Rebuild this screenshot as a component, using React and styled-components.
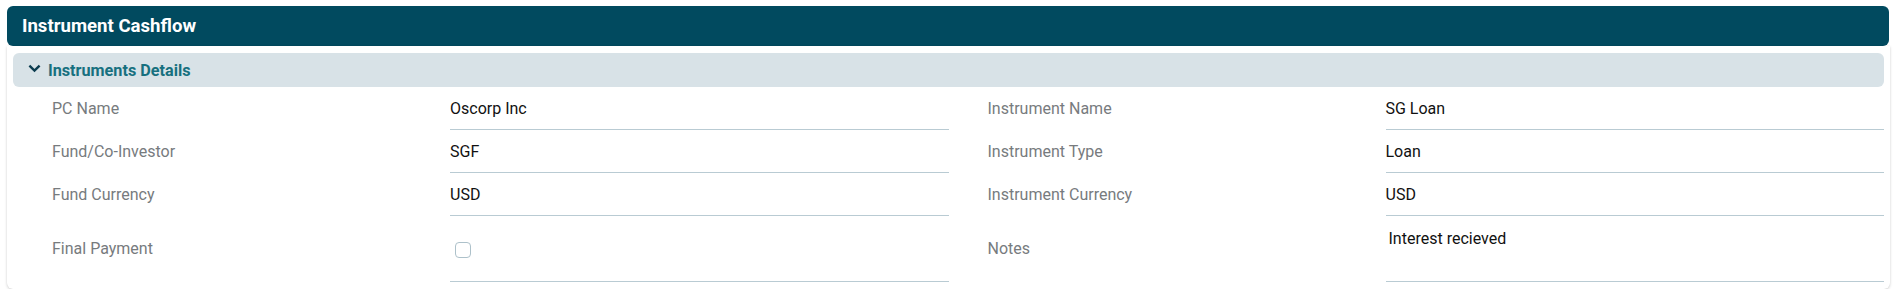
import React from "react";
import styled, { createGlobalStyle } from "styled-components";

const GlobalStyle = createGlobalStyle`
  html, body { margin: 0; padding: 0; background: #ffffff; }
  body { font-family: Roboto, "Noto Sans", Arial, sans-serif; }
  * { box-sizing: border-box; }
`;

const Page = styled.div`
  padding: 6px 6px 0 7px;
`;

const Panel = styled.section`
  display: flex;
  flex-direction: column;
`;

const PanelHeader = styled.header`
  height: 40px;
  background: #014a5f;
  border-radius: 6px;
  display: flex;
  align-items: center;
  padding: 0 15px;
  margin-right: 1px;
`;

const PanelTitle = styled.h1`
  margin: 0;
  color: #ffffff;
  font-family: Roboto, Arial, sans-serif;
  font-weight: 700;
  font-size: 18.6px;
  letter-spacing: 0;
`;

const Card = styled.div`
  background: #ffffff;
  border-radius: 0 0 6px 6px;
  box-shadow: 0 1px 3px rgba(0, 0, 0, 0.18), 0 0 1px rgba(0, 0, 0, 0.08);
  padding: 7px 6px 7px 6px;
`;

const SectionHeader = styled.div`
  height: 34px;
  background: #d8e2e7;
  border-radius: 6px;
  display: flex;
  align-items: center;
  gap: 7px;
  padding-left: 15px;
`;

const SectionTitle = styled.span`
  color: #17707f;
  font-weight: 700;
  font-size: 16.2px;
`;

const ChevronIcon = styled.svg`
  display: block;
  margin-top: -3px;
`;

const Chevron = () => (
  <ChevronIcon width="13" height="9" viewBox="0 0 13 9" aria-hidden="true">
    <path d="M1.4 1.6 L6.5 6.6 L11.6 1.6" fill="none" stroke="#0d3d50" strokeWidth="2.4" />
  </ChevronIcon>
);

const FieldGrid = styled.div`
  display: grid;
  grid-template-columns: 1fr 1fr;
`;

const Field = styled.div`
  display: grid;
  grid-template-columns: 437px 1fr;
  height: ${(p) => (p.$tall ? "66px" : "43px")};
`;

const Label = styled.div`
  padding-left: 39px;
  display: flex;
  align-items: center;
  color: #777b7e;
  font-size: 16px;
  padding-bottom: 1px;
`;

const Value = styled.div`
  display: flex;
  align-items: ${(p) => (p.$top ? "flex-start" : "center")};
  padding-top: ${(p) => (p.$top ? "13px" : "0")};
  padding-left: ${(p) => (p.$top ? "3px" : "0")};
  border-bottom: 1px solid #b9cbd3;
  color: #111111;
  font-size: 16px;
`;

const CheckBox = styled.span`
  display: inline-block;
  width: 16px;
  height: 16px;
  margin-left: 5px;
  margin-top: 2px;
  border: 1px solid #adc1ca;
  border-radius: 4px;
  background: #ffffff;
`;

const fields = [
  ["PC Name", "Oscorp Inc", "Instrument Name", "SG Loan"],
  ["Fund/Co-Investor", "SGF", "Instrument Type", "Loan"],
  ["Fund Currency", "USD", "Instrument Currency", "USD"],
];

export default function App() {
  return (
    <>
      <GlobalStyle />
      <Page>
        <Panel>
          <PanelHeader>
            <PanelTitle>Instrument Cashflow</PanelTitle>
          </PanelHeader>
          <Card>
            <SectionHeader>
              <Chevron />
              <SectionTitle>Instruments Details</SectionTitle>
            </SectionHeader>
            <FieldGrid>
              {fields.map(([l1, v1, l2, v2]) => (
                <React.Fragment key={l1}>
                  <Field>
                    <Label>{l1}</Label>
                    <Value>{v1}</Value>
                  </Field>
                  <Field>
                    <Label>{l2}</Label>
                    <Value>{v2}</Value>
                  </Field>
                </React.Fragment>
              ))}
              <Field $tall>
                <Label>Final Payment</Label>
                <Value>
                  <CheckBox />
                </Value>
              </Field>
              <Field $tall>
                <Label>Notes</Label>
                <Value $top>Interest recieved</Value>
              </Field>
            </FieldGrid>
          </Card>
        </Panel>
      </Page>
    </>
  );
}
